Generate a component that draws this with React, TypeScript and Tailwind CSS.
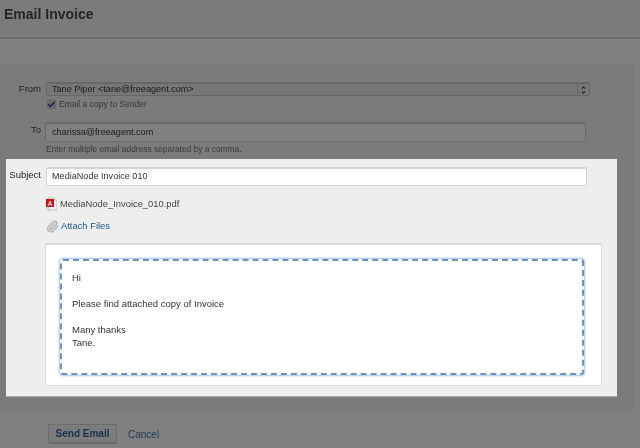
import { ChevronDown, ChevronUp, Check, Paperclip } from 'lucide-react'

// Label column + control column, shared by the form rows
function Row({ label, nudge, children }: { label: string; nudge?: boolean; children: React.ReactNode }) {
  return (
    <div className="flex items-start">
      <div className={`w-[41px] shrink-0 text-right text-[9.5px] leading-[14px] text-[#222] ${nudge ? 'pt-[1px]' : ''}`}>
        {label}
      </div>
      <div className="ml-[5px] min-w-0 flex-1">{children}</div>
    </div>
  )
}

function PdfIcon() {
  return (
    <svg width="11" height="14" viewBox="0 0 11 14" className="shrink-0">
      <path d="M2 1h6l3 3v9H2z" fill="#eee" stroke="#aaa" strokeWidth="0.7" />
      <rect x="0" y="2" width="8" height="8" fill="#c8141c" />
      <path d="M2 9l2-5 2 5M3 7.5h2" fill="none" stroke="#fff" strokeWidth="0.8" />
    </svg>
  )
}

export default function App() {
  return (
    <div className="flex h-[448px] w-[640px] flex-col overflow-hidden bg-[#808080] font-['Liberation_Sans',Arial,sans-serif] blur-[0.5px]">
      <header className="h-[39px] shrink-0 border-b-2 border-[#6e6e6e] bg-[#7b7b7b] pl-[4px] pt-[4px]">
        <h1 className="text-[14px] font-bold leading-[20px] text-[#262626]">Email Invoice</h1>
      </header>

      <div className="h-[25px] shrink-0" />

      <main className="h-[348px] w-[634px] shrink-0 rounded-br-[3px] bg-[#7b7b7b] pt-[18px]">
        <Row label="From">
          <div className="flex h-[14px] w-[544px] items-center rounded-[2px] border border-t-2 border-[#676767] bg-[#777] pl-[5px] text-[9.1px] text-[#1a1a1a]">
            <span className="flex-1">Tane Piper &lt;tane@freeagent.com&gt;</span>
            <span className="flex h-full w-[12px] flex-col items-center justify-center border-l border-[#686868] text-[#222]">
              <ChevronUp size={5} strokeWidth={5} />
              <ChevronDown size={5} strokeWidth={5} />
            </span>
          </div>
          <label className="mt-[2px] flex items-center">
            <span className="ml-[1px] flex h-[10px] w-[9px] items-center justify-center rounded-[1px] bg-[#6a6a6a] text-[#1b2a44]">
              <Check size={11} strokeWidth={4} />
            </span>
            <span className="ml-[3px] text-[8.5px] leading-[12px] text-[#383838]">Email a copy to Sender</span>
          </label>
        </Row>

        <div className="mt-[12px]">
          <Row label="To" nudge>
            <div className="-ml-[1px] flex h-[20px] w-[541px] items-center rounded-[2px] border border-t-2 border-[#6c6c6c] bg-[#808080] pl-[6px] text-[9.1px] text-[#1a1a1a]">
              charissa@freeagent.com
            </div>
            <p className="mt-[1px] text-[8.4px] leading-[12px] text-[#3a3a3a]">
              Enter multiple email address separated by a comma.
            </p>
          </Row>
        </div>

        {/* Highlighted part of the form */}
        <section className="ml-[6px] mt-[4px] h-[238px] w-[611px] border-b border-[#aaa] bg-[#eeeeee] pr-[30px] pt-[8px]">
          <div className="-ml-[6px]">
            <Row label="Subject" nudge>
              <div className="flex h-[19px] w-[541px] items-center rounded-[2px] border border-t-2 border-[#d4d4d4] bg-white pl-[5px] text-[9.1px] text-[#333]">
                MediaNode Invoice 010
              </div>
              <div className="mt-[11px] flex h-[14px] items-center">
                <PdfIcon />
                <span className="ml-[3px] text-[9.4px] text-[#444]">MediaNode_Invoice_010.pdf</span>
              </div>
              <div className="mt-[8px] flex h-[14px] items-center">
                <Paperclip size={13} strokeWidth={2.6} className="text-[#b4b4b4]" />
                <span className="ml-[2px] text-[9.4px] text-[#1d5a8c]">Attach Files</span>
              </div>
            </Row>
          </div>
          <div className="ml-[39px] mt-[10px] h-[143px] w-[557px] rounded-[1px] border border-t-2 border-[#dcdcdc] bg-white pl-[14px] pt-[14px]">
            <div className="h-[116px] w-[524px] rounded-[3px] border-2 border-dashed border-[#6b93bd] pl-[10px] pt-[10px] text-[9.5px] leading-[13px] text-[#333] shadow-[0_0_2px_1px_#9cc3ee]">
              <p>Hi</p>
              <p className="mt-[13px]">Please find attached copy of Invoice</p>
              <p className="mt-[13px]">Many thanks</p>
              <p>Tane.</p>
            </div>
          </div>
        </section>
      </main>

      <footer className="flex items-center pl-[48px] pt-[12px]">
        <button className="h-[20px] w-[69px] rounded-[2px] border border-b-2 border-[#6b6b6b] bg-[#7c7c7c] text-[10px] font-bold text-[#17304d]">
          Send Email
        </button>
        <a className="ml-[11px] text-[10px] text-[#1f3b57]">Cancel</a>
      </footer>
    </div>
  )
}
